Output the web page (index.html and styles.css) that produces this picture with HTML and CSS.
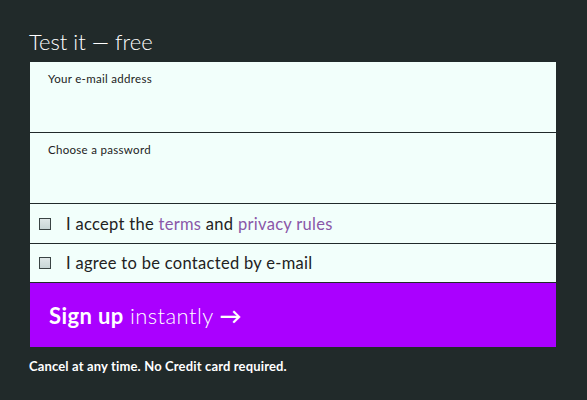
FILE: index.html
```html
<!DOCTYPE html>
<html lang="en">
<head>
    <meta charset="UTF-8">
    <meta name="viewport" content="width=device-width, initial-scale=1.0">
    <title>Test it — free</title>
    <link rel="stylesheet" href="styles.css">
</head>
<body>
    <div class="signup">
        <h2>Test it — free</h2>
        <form class="signup-form">
            <label class="field">
                <span>Your e-mail address</span>
                <input type="email">
            </label>
            <label class="field">
                <span>Choose a password</span>
                <input type="password">
            </label>
            <label class="check">
                <span class="box"></span>
                <span>I accept the <a href="#">terms</a> and <a href="#">privacy rules</a></span>
            </label>
            <label class="check">
                <span class="box"></span>
                <span>I agree to be contacted by e-mail</span>
            </label>
            <button type="button"><strong>Sign up</strong> instantly <b class="arrow">→</b></button>
        </form>
        <p class="note">Cancel at any time. No Credit card required.</p>
    </div>
</body>
</html>
```

FILE: styles.css
```css
body {
    font-family: Lato, 'Open Sans', sans-serif;
    margin: 0;
    padding: 0 31px 0 30px;
    background-color: #212a2a;
    color: #222;
}
.signup h2 {
    font-weight: 300;
    font-size: 22px;
    color: #fff;
    margin: 0 0 0 -1px;
    padding: 30px 0 8px;
    line-height: 24px;
}
.signup-form {
    display: flex;
    flex-direction: column;
    background: #f2fffb;
}
.field {
    display: flex;
    flex-direction: column;
    height: 71px;
    padding: 10px 18px 0;
    box-sizing: border-box;
    border-bottom: 1px solid #212a2a;
    font-size: 11.5px;
    letter-spacing: 0.3px;
}
.field input {
    border: none;
    background: transparent;
    outline: none;
}
.check {
    display: flex;
    align-items: center;
    gap: 15px;
    height: 39px;
    padding: 0 9px;
    border-bottom: 1px solid #212a2a;
    font-size: 16.5px;
    letter-spacing: 0.3px;
}
.check:nth-of-type(4) {
    height: 38px;
}
.check .box {
    width: 10px;
    height: 10px;
    border: 1px solid #3a4444;
    background: linear-gradient(#dfe8e8, #c8d6d6);
}
.check a {
    color: #8a57a8;
    text-decoration: none;
}
button {
    height: 64px;
    border: none;
    background-color: #aa00ff;
    color: #fff;
    font-family: inherit;
    font-size: 22px;
    font-weight: 300;
    letter-spacing: 0.4px;
    text-align: left;
    padding: 0 19px;
    cursor: pointer;
}
button strong,
button .arrow {
    font-weight: 700;
}
.note {
    color: #fff;
    font-size: 13px;
    font-weight: 700;
    letter-spacing: 0.15px;
    margin: 11px 0 0 -1px;
}
```
